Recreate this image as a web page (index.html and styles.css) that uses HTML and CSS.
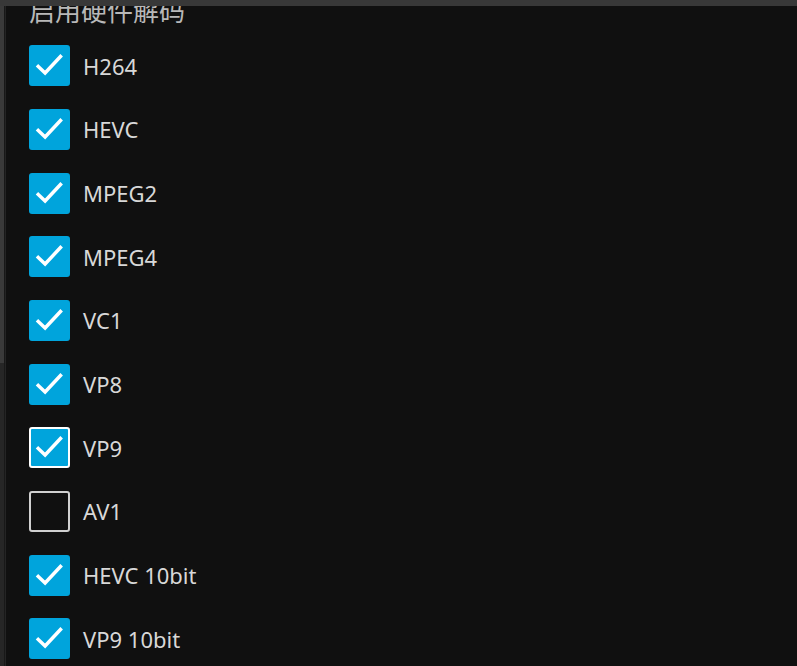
FILE: index.html
```html
<!DOCTYPE html>
<html lang="zh">
<head>
<meta charset="utf-8">
<title>启用硬件解码</title>
<link rel="stylesheet" href="styles.css">
</head>
<body>
<div class="topbar"></div>
<div class="frame">
  <div class="edge"><div class="edge-thumb"></div></div>
  <div class="edge-line"></div>
  <div class="edge-line2"></div>
  <main class="main">
    <h3 class="heading">启用硬件解码</h3>
    <div class="list">
      <label class="row"><span class="box checked"><svg viewBox="0 0 40 40"><path d="M9 21 L15.7 27.3 L30.7 11.3"/></svg></span><span class="label">H264</span></label>
      <label class="row"><span class="box checked"><svg viewBox="0 0 40 40"><path d="M9 21 L15.7 27.3 L30.7 11.3"/></svg></span><span class="label">HEVC</span></label>
      <label class="row"><span class="box checked"><svg viewBox="0 0 40 40"><path d="M9 21 L15.7 27.3 L30.7 11.3"/></svg></span><span class="label">MPEG2</span></label>
      <label class="row"><span class="box checked"><svg viewBox="0 0 40 40"><path d="M9 21 L15.7 27.3 L30.7 11.3"/></svg></span><span class="label">MPEG4</span></label>
      <label class="row"><span class="box checked"><svg viewBox="0 0 40 40"><path d="M9 21 L15.7 27.3 L30.7 11.3"/></svg></span><span class="label">VC1</span></label>
      <label class="row"><span class="box checked"><svg viewBox="0 0 40 40"><path d="M9 21 L15.7 27.3 L30.7 11.3"/></svg></span><span class="label">VP8</span></label>
      <label class="row"><span class="box checked focused"><svg viewBox="0 0 40 40"><path d="M9 21 L15.7 27.3 L30.7 11.3"/></svg></span><span class="label">VP9</span></label>
      <label class="row"><span class="box"></span><span class="label">AV1</span></label>
      <label class="row"><span class="box checked"><svg viewBox="0 0 40 40"><path d="M9 21 L15.7 27.3 L30.7 11.3"/></svg></span><span class="label">HEVC 10bit</span></label>
      <label class="row"><span class="box checked"><svg viewBox="0 0 40 40"><path d="M9 21 L15.7 27.3 L30.7 11.3"/></svg></span><span class="label">VP9 10bit</span></label>
    </div>
  </main>
</div>
</body>
</html>
```

FILE: styles.css
```css
html, body {
  margin: 0;
  padding: 0;
  height: 100%;
  overflow: hidden;
  background: #101010;
  font-family: "Noto Sans", "Noto Sans CJK SC", sans-serif;
}
body {
  display: flex;
  flex-direction: column;
}
.topbar {
  height: 6px;
  background: #383838;
  flex: none;
}
.frame {
  flex: 1;
  display: flex;
  min-height: 0;
}
.edge {
  width: 4px;
  background: #262626;
  flex: none;
}
.edge-thumb {
  height: 357px;
  background: #3a3a3a;
}
.edge-line {
  width: 1px;
  background: #181818;
  flex: none;
}
.edge-line2 {
  width: 1px;
  background: #242424;
  flex: none;
}
.main {
  flex: 1;
  overflow: hidden;
  padding-left: 23px;
}
.heading {
  margin: -12px 0 0 0;
  font-family: "Noto Sans CJK SC", sans-serif;
  font-size: 26px;
  font-weight: 400;
  line-height: 32px;
  color: #b8b8b8;
}
.list {
  margin-top: 8px;
  display: flex;
  flex-direction: column;
}
.row {
  height: 63.67px;
  display: flex;
  align-items: center;
  gap: 13px;
  flex: none;
}
.box {
  box-sizing: border-box;
  width: 41px;
  height: 41px;
  border: 2px solid #d0d0d0;
  border-radius: 3px;
  flex: none;
  position: relative;
}
.box.checked {
  background: #00a4dc;
  border-color: #00a4dc;
}
.box.checked.focused {
  border-color: #ffffff;
}
.box svg {
  position: absolute;
  left: -2px;
  top: -2px;
  width: 41px;
  height: 41px;
  fill: none;
  stroke: #ffffff;
  stroke-width: 3.4;
  stroke-linecap: square;
  stroke-linejoin: miter;
}
.label {
  font-size: 22px;
  color: #d8d8d8;
  line-height: 30px;
}
```
